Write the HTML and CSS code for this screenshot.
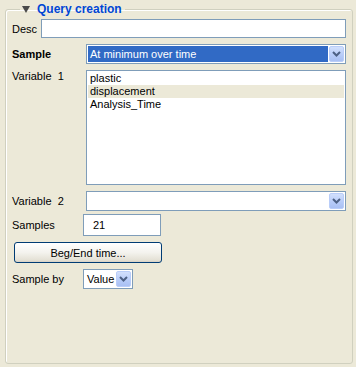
FILE: index.html
```html
<!DOCTYPE html>
<html>
<head>
<meta charset="utf-8">
<link rel="stylesheet" href="styles.css">
</head>
<body>
<fieldset class="panel">
  <legend class="panel-title"><span class="twisty"></span>Query creation</legend>

  <div class="row row-desc">
    <label class="lbl lbl-desc">Desc</label>
    <div class="textbox textbox-wide"></div>
  </div>

  <div class="row row-sample">
    <label class="lbl lbl-col lbl-bold">Sample</label>
    <div class="combo combo-wide combo-focus">
      <span class="combo-text">At minimum over time</span>
      <span class="drop"><svg width="9" height="6" viewBox="0 0 9 6"><path d="M1 1 L4.5 4.5 L8 1" fill="none" stroke="#4d6185" stroke-width="2"/></svg></span>
    </div>
  </div>

  <div class="row row-var1">
    <label class="lbl lbl-col lbl-top">Variable  1</label>
    <div class="listbox">
      <div class="item">plastic</div>
      <div class="item item-sel">displacement</div>
      <div class="item">Analysis_Time</div>
    </div>
  </div>

  <div class="row row-var2">
    <label class="lbl lbl-col">Variable  2</label>
    <div class="combo combo-wide">
      <span class="combo-text"></span>
      <span class="drop"><svg width="9" height="6" viewBox="0 0 9 6"><path d="M1 1 L4.5 4.5 L8 1" fill="none" stroke="#4d6185" stroke-width="2"/></svg></span>
    </div>
  </div>

  <div class="row row-samples">
    <label class="lbl lbl-col2">Samples</label>
    <div class="textbox textbox-num">21</div>
  </div>

  <div class="row row-btn">
    <button class="btn">Beg/End time...</button>
  </div>

  <div class="row row-by">
    <label class="lbl lbl-col2">Sample by</label>
    <div class="combo combo-small">
      <span class="combo-text">Value</span>
      <span class="drop"><svg width="9" height="6" viewBox="0 0 9 6"><path d="M1 1 L4.5 4.5 L8 1" fill="none" stroke="#4d6185" stroke-width="2"/></svg></span>
    </div>
  </div>
</fieldset>
</body>
</html>
```

FILE: styles.css
```css
html, body {
  margin: 0;
  padding: 0;
  background: #ece9d8;
}
body {
  width: 356px;
  height: 367px;
  overflow: hidden;
  font-family: "Liberation Sans", Arial, sans-serif;
  font-size: 11px;
  color: #000;
}
.panel {
  box-sizing: border-box;
  margin: 2px 0 0 5px;
  width: 348px;
  height: 362px;
  border: 1px solid #d0d0bf;
  border-radius: 3px;
  box-shadow: 1px 1px 0 #fff inset;
  padding: 0 0 0 6px;
}
.panel-title {
  padding: 0 3px 0 2px;
  margin-left: 8px;
  font-size: 12px;
  font-weight: bold;
  color: #0046d5;
  line-height: 14px;
  display: flex;
  align-items: center;
}
.twisty {
  display: inline-block;
  width: 0;
  height: 0;
  border-left: 4px solid transparent;
  border-right: 4px solid transparent;
  border-top: 7px solid #4a4a4a;
  margin-right: 7px;
}
.row {
  display: flex;
  align-items: center;
}
.row-desc { margin-top: 3px; }
.row-sample { margin-top: 6px; }
.row-var1 { margin-top: 6px; align-items: flex-start; }
.row-var2 { margin-top: 6px; }
.row-samples { margin-top: 3px; }
.row-btn { margin-top: 6px; }
.row-by { margin-top: 6px; }

.lbl { white-space: pre; }
.lbl-desc { width: 29px; }
.lbl-col { width: 74px; }
.lbl-col2 { width: 71px; }
.lbl-bold { font-weight: bold; }
.lbl-top { padding-top: 0; }

.textbox {
  box-sizing: border-box;
  background: #fff;
  border: 1px solid #7f9db9;
}
.textbox-wide {
  width: 305px;
  height: 19px;
}
.textbox-num {
  width: 78px;
  height: 22px;
  padding-left: 9px;
  line-height: 20px;
}

.combo {
  box-sizing: border-box;
  background: #fff;
  border: 1px solid #7f9db9;
  display: flex;
  align-items: center;
  padding: 1px;
  height: 20px;
}
.combo-wide { width: 260px; }
.combo-small { width: 50px; }
.combo-text {
  flex: 1;
  height: 16px;
  line-height: 16px;
  padding-left: 2px;
  white-space: nowrap;
  overflow: hidden;
}
.combo-focus .combo-text {
  background: #316ac5;
  color: #fff;
}
.drop {
  box-sizing: border-box;
  width: 15px;
  height: 16px;
  margin-left: 1px;
  border-radius: 2px;
  border: 1px solid #b9cdf9;
  background: linear-gradient(#d2e0fd, #b6cbf8 60%, #a9c0f3);
  display: flex;
  align-items: center;
  justify-content: center;
}

.listbox {
  box-sizing: border-box;
  width: 260px;
  height: 115px;
  background: #fff;
  border: 1px solid #7f9db9;
  padding: 1px;
}
.item {
  height: 13px;
  line-height: 13px;
  padding-left: 2px;
}
.item-sel { background: #ece9d8; }

.btn {
  box-sizing: border-box;
  margin-left: 2px;
  width: 148px;
  height: 21px;
  border: 1px solid #003c74;
  border-radius: 3px;
  background: linear-gradient(#ffffff, #f4f3ee 50%, #e4e1d5 90%, #d6d0c5);
  font-family: "Liberation Sans", Arial, sans-serif;
  font-size: 11px;
  color: #000;
  padding: 0;
}
```
